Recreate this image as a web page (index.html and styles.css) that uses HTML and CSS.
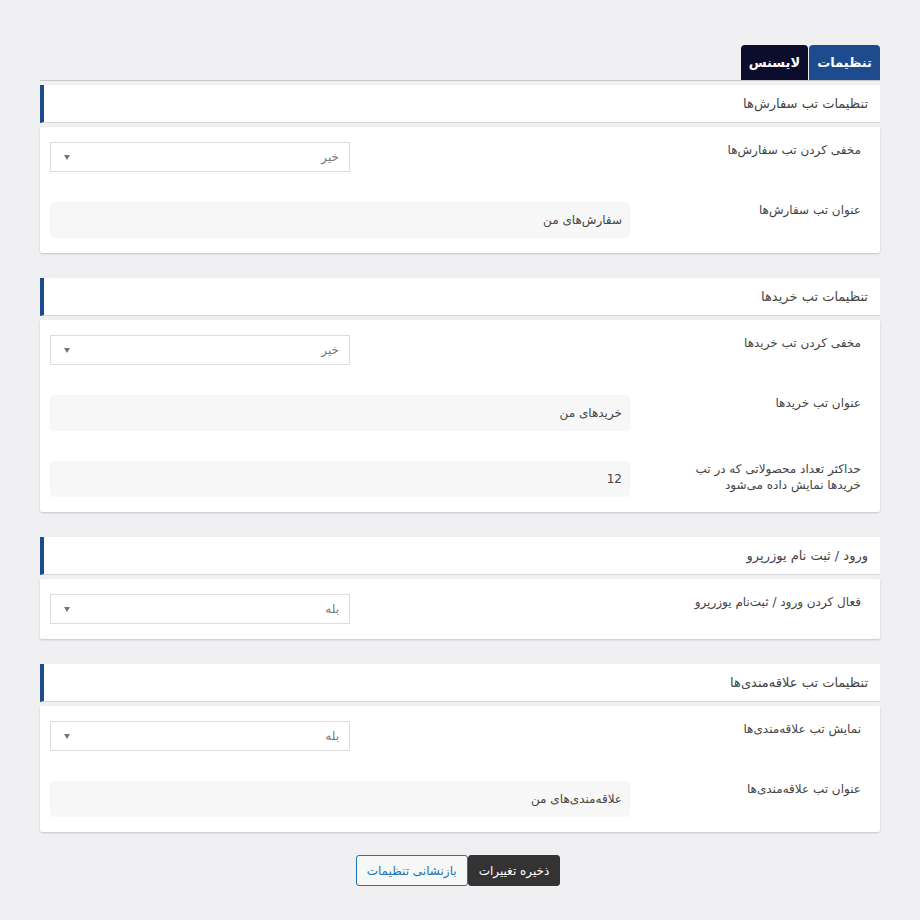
FILE: index.html
```html
<!DOCTYPE html>
<html lang="fa" dir="rtl">

<head>
    <meta charset="UTF-8" />
    <meta name="viewport" content="width=device-width, initial-scale=1.0" />
    <title>تنظیمات</title>
    <link rel="stylesheet" href="styles.css">
</head>

<body>
    <div class="wrap">
        <div class="tabs">
            <span class="tab active">تنظیمات</span>
            <span class="tab">لایسنس</span>
        </div>

        <div class="section">
            <div class="section-head">تنظیمات تب سفارش‌ها</div>
            <div class="section-body">
                <div class="row">
                    <label class="row-label">مخفی کردن تب سفارش‌ها</label>
                    <div class="select">
                        <span>خیر</span>
                        <i class="arrow"></i>
                    </div>
                </div>
                <div class="row">
                    <label class="row-label">عنوان تب سفارش‌ها</label>
                    <input class="field" type="text" value="سفارش‌های من">
                </div>
            </div>
        </div>

        <div class="section">
            <div class="section-head">تنظیمات تب خریدها</div>
            <div class="section-body">
                <div class="row">
                    <label class="row-label">مخفی کردن تب خریدها</label>
                    <div class="select">
                        <span>خیر</span>
                        <i class="arrow"></i>
                    </div>
                </div>
                <div class="row">
                    <label class="row-label">عنوان تب خریدها</label>
                    <input class="field" type="text" value="خریدهای من">
                </div>
                <div class="row">
                    <label class="row-label">حداکثر تعداد محصولاتی که در تب خریدها نمایش داده می‌شود</label>
                    <input class="field" type="text" value="12">
                </div>
            </div>
        </div>

        <div class="section">
            <div class="section-head">ورود / ثبت نام یوزرپرو</div>
            <div class="section-body">
                <div class="row">
                    <label class="row-label">فعال کردن ورود / ثبت‌نام یوزرپرو</label>
                    <div class="select">
                        <span>بله</span>
                        <i class="arrow"></i>
                    </div>
                </div>
            </div>
        </div>

        <div class="section">
            <div class="section-head">تنظیمات تب علاقه‌مندی‌ها</div>
            <div class="section-body">
                <div class="row">
                    <label class="row-label">نمایش تب علاقه‌مندی‌ها</label>
                    <div class="select">
                        <span>بله</span>
                        <i class="arrow"></i>
                    </div>
                </div>
                <div class="row">
                    <label class="row-label">عنوان تب علاقه‌مندی‌ها</label>
                    <input class="field" type="text" value="علاقه‌مندی‌های من">
                </div>
            </div>
        </div>

        <div class="actions">
            <button class="btn btn-save">ذخیره تغییرات</button>
            <button class="btn btn-reset">بازنشانی تنظیمات</button>
        </div>
    </div>
</body>

</html>
```

FILE: styles.css
```css
* {
    margin: 0;
    padding: 0;
    box-sizing: border-box;
}

body {
    font-family: 'DejaVu Sans', sans-serif;
    background: #f0f0f2;
    color: #444;
    font-size: 12px;
}

.wrap {
    padding: 45px 40px 0;
}

/* Tabs */
.tabs {
    display: flex;
    gap: 1px;
    border-bottom: 1px solid #c9c9cc;
}

.tab {
    height: 35px;
    line-height: 35px;
    padding: 0 8px;
    color: #fff;
    font-weight: bold;
    font-size: 13px;
    background: #0c0c2c;
    border-radius: 4px 4px 0 0;
}

.tab.active {
    background: #1e4b8d;
}

/* Sections */
.section {
    margin-top: 25px;
}

.tabs + .section {
    margin-top: 4px;
}

.section-head {
    height: 38px;
    display: flex;
    align-items: center;
    padding-right: 12px;
    background: #fff;
    border-left: 4px solid #1e4b8d;
    border-bottom: 1px solid #d6d6d8;
    font-size: 13px;
    color: #444;
}

.section-body {
    margin-top: 4px;
    background: #fff;
    padding: 15px 10px;
    display: flex;
    flex-direction: column;
    gap: 30px;
    border-radius: 2px;
    box-shadow: 0 1px 2px rgba(0, 0, 0, 0.18);
}

.row {
    display: grid;
    grid-template-columns: 240px 1fr;
    align-items: start;
}

.row-label {
    padding: 0 9px 0 40px;
    line-height: 16px;
    font-size: 12px;
    color: #444;
}

.select {
    justify-self: end;
    width: 300px;
    height: 30px;
    display: flex;
    align-items: center;
    justify-content: space-between;
    padding: 0 10px 0 13px;
    border: 1px solid #ddd;
    background: #fff;
    color: #777;
    font-size: 12px;
}

.arrow {
    width: 0;
    height: 0;
    border-left: 3.5px solid transparent;
    border-right: 3.5px solid transparent;
    border-top: 5px solid #777;
}

.field {
    width: 100%;
    height: 36px;
    padding: 0 8px;
    border: none;
    border-radius: 4px;
    background: #f7f7f7;
    font-family: inherit;
    font-size: 12px;
    color: #444;
    direction: rtl;
    outline: none;
}

/* Buttons */
.actions {
    display: flex;
    justify-content: center;
    margin-top: 23px;
    padding-right: 4px;
}

.btn {
    height: 31px;
    padding: 0 10px;
    font-family: inherit;
    font-size: 12px;
    border-radius: 3px;
    cursor: pointer;
}

.btn-save {
    background: #333;
    color: #fff;
    border: 1px solid #333;
}

.btn-reset {
    background: #f6f7f7;
    color: #2271b1;
    border: 1px solid #2271b1;
}
```
